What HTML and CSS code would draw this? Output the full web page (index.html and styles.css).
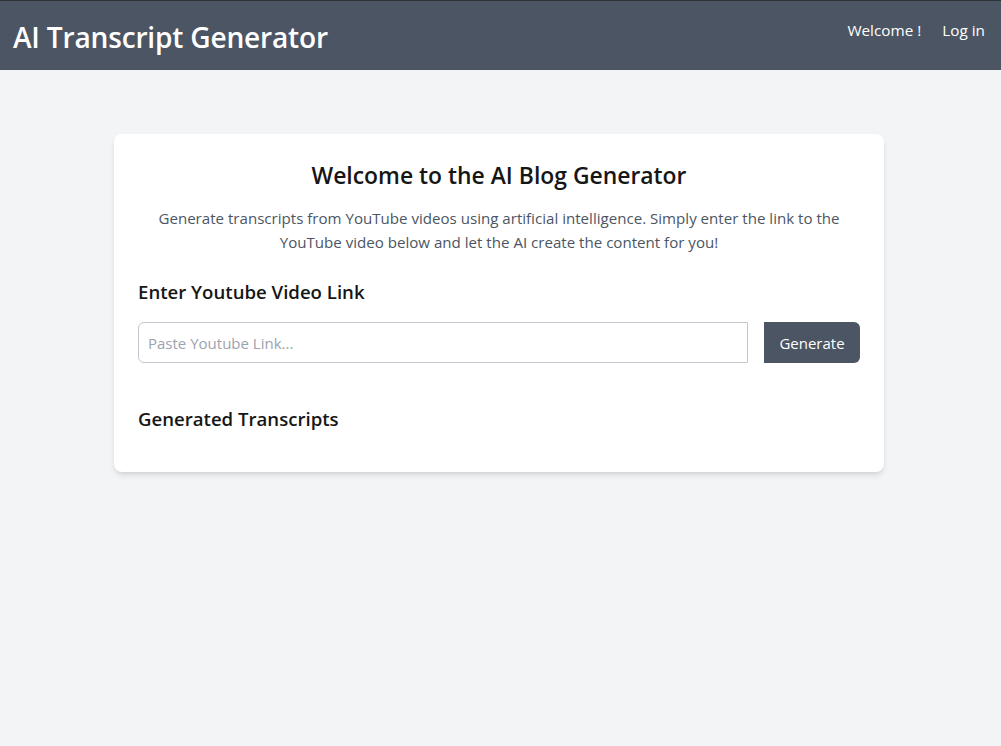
FILE: index.html
```html
<!DOCTYPE html>
<html lang="en">
<head>
<meta charset="utf-8">
<title>AI Transcript Generator</title>
<link rel="stylesheet" href="styles.css">
</head>
<body>
<header class="topbar">
  <h1 class="brand">AI Transcript Generator</h1>
  <nav class="nav">
    <span class="nav-item">Welcome !</span>
    <a class="nav-item" href="#">Log in</a>
  </nav>
</header>
<main class="main">
  <section class="card">
    <h2 class="card-title">Welcome to the AI Blog Generator</h2>
    <p class="card-text">Generate transcripts from YouTube videos using artificial intelligence. Simply enter the link to the YouTube video below and let the AI create the content for you!</p>
    <h3 class="section-title">Enter Youtube Video Link</h3>
    <div class="input-row">
      <input class="link-input" type="url" placeholder="Paste Youtube Link...">
      <button class="gen-btn" type="button">Generate</button>
    </div>
    <h3 class="section-title results-title">Generated Transcripts</h3>
    <div class="results"></div>
  </section>
</main>
</body>
</html>
```

FILE: styles.css
```css
* { box-sizing: border-box; }
html, body { margin: 0; padding: 0; }
body {
  background: #f3f4f6;
  font-family: "Open Sans", "Noto Sans", sans-serif;
  color: #111827;
  min-height: 746px;
}
.topbar {
  background: #4b5563;
  border-top: 1px solid #2f3338;
  height: 70px;
  padding: 3px 16px 0 13px;
  display: flex;
  align-items: center;
  justify-content: space-between;
  color: #fff;
}
.brand {
  margin: 0;
  font-size: 28.1px;
  font-weight: 600;
  letter-spacing: -0.2px;
}
.nav {
  display: flex;
  gap: 21px;
  align-items: center;
  margin-bottom: 14px;
}
.nav-item {
  color: #fff;
  text-decoration: none;
  font-size: 15.3px;
}
.main {
  display: flex;
  justify-content: center;
  padding: 64px 3px 0 0;
}
.card {
  width: 770px;
  background: #fff;
  border-radius: 8px;
  box-shadow: 0 4px 6px -1px rgba(0,0,0,0.1), 0 2px 4px -2px rgba(0,0,0,0.1);
  padding: 24px 24px 24px;
}
.card-title {
  margin: 0 0 14px;
  padding-top: 2px;
  text-align: center;
  font-size: 22.9px;
  line-height: 32px;
  font-weight: 600;
  color: #161616;
}
.card-text {
  margin: 0;
  text-align: center;
  color: #4b5563;
  font-size: 15.1px;
  line-height: 24px;
}
.section-title {
  margin: 24px 0 16px;
  font-size: 18.6px;
  line-height: 28px;
  font-weight: 600;
  color: #161616;
}
.input-row {
  display: flex;
  gap: 16px;
}
.link-input {
  flex: 1;
  height: 41px;
  border: 1px solid #c3c8d0;
  border-radius: 6px 0 0 6px;
  padding: 0 9px;
  font-family: inherit;
  font-size: 15px;
  color: #111827;
  outline: none;
}
.link-input::placeholder { color: #9ca3af; }
.gen-btn {
  width: 96px;
  height: 41px;
  border: none;
  border-radius: 0 6px 6px 0;
  background: #4b5563;
  color: #fff;
  font-family: inherit;
  font-size: 15px;
}
.results-title {
  margin-top: 42px;
  margin-bottom: 0;
}
.results { height: 15px; }
```
